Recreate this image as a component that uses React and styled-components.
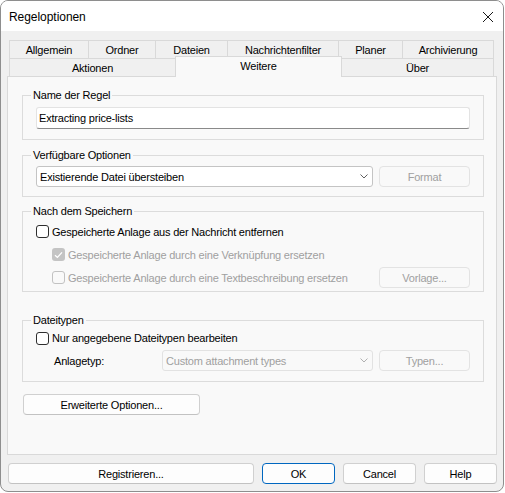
import React from "react";
import styled, { createGlobalStyle } from "styled-components";

const Global = createGlobalStyle`
  html, body { margin: 0; padding: 0; background: #ffffff; }
  * { box-sizing: border-box; }
  body { font-family: "Liberation Sans", Arial, sans-serif; font-size: 11px; color: #000; }
`;

const Window = styled.div`
  width: 504px;
  height: 492px;
  border: 1px solid #8e8e8e;
  border-radius: 8px;
  overflow: hidden;
  background: #f0f0f0;
  display: flex;
  flex-direction: column;
`;

const TitleBar = styled.div`
  height: 30px;
  flex: none;
  background: #ffffff;
  display: flex;
  align-items: center;
  justify-content: space-between;
  padding: 0 9px 0 8px;
`;

const Title = styled.span`
  font-size: 12px;
  letter-spacing: -0.05px;
  padding-top: 1px;
`;

const CloseBtn = styled.span`
  display: flex;
  width: 12px;
  height: 12px;
  margin-top: 1px;
`;

const Body = styled.div`
  flex: 1;
  display: flex;
  flex-direction: column;
  padding: 9px 6px 0 6px;
  min-height: 0;
`;

const TabStrip = styled.div`
  display: flex;
  flex-direction: column;
  margin: 0 3px 0 2px;
  position: relative;
  z-index: 2;
`;

const TabRow = styled.div`
  display: flex;
  height: 18px;
`;

const Tab = styled.div`
  flex: none;
  height: 18px;
  border-top: 1px solid #d9d9d9;
  border-left: 1px solid #d9d9d9;
  border-right: ${(p) => (p.$last ? "1px solid #d9d9d9" : "none")};
  background: #f0f0f0;
  display: flex;
  align-items: center;
  justify-content: center;
  letter-spacing: -0.2px;
  padding-top: 1px;
`;

const ActiveTab = styled.div`
  flex: none;
  height: 21px;
  margin-top: -2px;
  margin-right: -1px;
  position: relative;
  z-index: 3;
  border: 1px solid #d9d9d9;
  border-bottom: none;
  background: #f9f9f9;
  display: flex;
  justify-content: center;
  padding-top: 3px;
  letter-spacing: -0.2px;
`;

const Panel = styled.div`
  flex: 1;
  border: 1px solid #d9d9d9;
  background: #f9f9f9;
  padding: 12px 12px 0 14px;
  display: flex;
  flex-direction: column;
  position: relative;
  z-index: 1;
`;

const Group = styled.fieldset`
  margin: ${(p) => p.$mt || 0}px 0 0 0;
  border: 1px solid #dcdcdc;
  padding: ${(p) => p.$pt || 0}px 13px ${(p) => p.$pb || 0}px 13px;
  min-width: 0;
`;

const Legend = styled.legend`
  padding: 0 2px;
  margin-left: -5px;
  line-height: 13px;
  letter-spacing: -0.2px;
`;

const TextInput = styled.div`
  height: 22px;
  background: #ffffff;
  border: 1px solid #e3e3e3;
  border-bottom: 1px solid #8a8a8a;
  border-radius: 3px;
  display: flex;
  align-items: center;
  padding-left: 2px;
  letter-spacing: -0.2px;
`;

const Line = styled.div`
  display: flex;
  align-items: center;
  height: ${(p) => p.$h || 23}px;
  padding-left: ${(p) => p.$indent || 0}px;
`;

const Select = styled.div`
  width: ${(p) => p.$w}px;
  height: ${(p) => p.$h || 21}px;
  flex: none;
  margin-left: ${(p) => p.$ml || 0}px;
  background: ${(p) => (p.$disabled ? "#f9f9f9" : "#ffffff")};
  border: 1px solid ${(p) => (p.$disabled ? "#e2e2e2" : "#c4c4c4")};
  border-radius: 3px;
  display: flex;
  align-items: center;
  justify-content: space-between;
  padding: 0 4px 0 3px;
  color: ${(p) => (p.$disabled ? "#a0a0a0" : "#000")};
  letter-spacing: -0.2px;
`;

const Button = styled.div`
  flex: none;
  width: ${(p) => p.$w}px;
  height: ${(p) => p.$h || 21}px;
  margin-left: ${(p) => p.$ml || 0}px;
  background: ${(p) => (p.$disabled ? "#f9f9f9" : "#fdfdfd")};
  border: 1px solid ${(p) => (p.$primary ? "#0067c0" : p.$disabled ? "#e3e3e3" : "#d0d0d0")};
  border-bottom-color: ${(p) => (p.$primary ? "#0067c0" : p.$disabled ? "#e3e3e3" : "#c2c2c2")};
  border-radius: 4px;
  display: flex;
  align-items: center;
  justify-content: center;
  color: ${(p) => (p.$disabled ? "#a0a0a0" : "#000")};
  letter-spacing: -0.2px;
`;

const Box = styled.span`
  width: 13px;
  height: 13px;
  flex: none;
  border-radius: 3px;
  border: 1px solid ${(p) => (p.$checked ? "transparent" : p.$disabled ? "#c2c2c2" : "#2e2e2e")};
  background: ${(p) => (p.$checked ? "#c4c4c4" : p.$disabled ? "#f9f9f9" : "#ffffff")};
  display: flex;
  align-items: center;
  justify-content: center;
  margin-right: 3px;
`;

const Label = styled.span`
  color: ${(p) => (p.$disabled ? "#a0a0a0" : "#000")};
  letter-spacing: -0.2px;
`;

const FieldLabel = styled.span`
  width: ${(p) => p.$w}px;
  flex: none;
  letter-spacing: -0.2px;
`;

const Spacer = styled.div`
  flex: 1;
`;

const Footer = styled.div`
  display: flex;
  gap: 8px;
  padding: 8px 0 7px 1px;
  flex: none;
`;

const Check = ({ checked, disabled }) => (
  <Box $checked={checked} $disabled={disabled}>
    {checked && (
      <svg width="9" height="8" viewBox="0 0 9 8">
        <path d="M1 4.2 L3.4 6.4 L8 1.4" fill="none" stroke="#ffffff" strokeWidth="1.3" />
      </svg>
    )}
  </Box>
);

const Chevron = ({ color = "#606060" }) => (
  <svg width="8" height="5" viewBox="0 0 8 5">
    <path d="M0.5 0.5 L4 4 L7.5 0.5" fill="none" stroke={color} strokeWidth="1" />
  </svg>
);

const row1 = [
  ["Allgemein", 79],
  ["Ordner", 67],
  ["Dateien", 72],
  ["Nachrichtenfilter", 111],
  ["Planer", 64],
  ["Archivierung", 92],
];

export default function App() {
  return (
    <>
      <Global />
      <Window>
        <TitleBar>
          <Title>Regeloptionen</Title>
          <CloseBtn>
            <svg width="12" height="12" viewBox="0 0 12 12">
              <path d="M1 1 L11 11 M11 1 L1 11" stroke="#1a1a1a" strokeWidth="1" />
            </svg>
          </CloseBtn>
        </TitleBar>
        <Body>
          <TabStrip>
            <TabRow>
              {row1.map(([t, w], i) => (
                <Tab key={t} style={{ width: w }} $last={i === row1.length - 1}>
                  {t}
                </Tab>
              ))}
            </TabRow>
            <TabRow>
              <Tab style={{ width: 166 }}>Aktionen</Tab>
              <ActiveTab style={{ width: 167 }}>Weitere</ActiveTab>
              <Tab style={{ width: 153 }} $last>
                Über
              </Tab>
            </TabRow>
          </TabStrip>
          <Panel>
            <Group $pt={5} $pb={10}>
              <Legend>Name der Regel</Legend>
              <TextInput>Extracting price-lists</TextInput>
            </Group>
            <Group $mt={9} $pt={4} $pb={9}>
              <Legend>Verfügbare Optionen</Legend>
              <Line $h={21}>
                <Select $w={337}>
                  Existierende Datei übersteiben
                  <Chevron />
                </Select>
                <Button $w={91} $h={21} $ml={6} $disabled>
                  Format
                </Button>
              </Line>
            </Group>
            <Group $mt={8} $pt={2} $pb={2}>
              <Legend>Nach dem Speichern</Legend>
              <Line>
                <Check />
                <Label>Gespeicherte Anlage aus der Nachricht entfernen</Label>
              </Line>
              <Line $indent={16}>
                <Check checked disabled />
                <Label $disabled>Gespeicherte Anlage durch eine Verknüpfung ersetzen</Label>
              </Line>
              <Line $indent={16}>
                <Check disabled />
                <Label $disabled>Gespeicherte Anlage durch eine Textbeschreibung ersetzen</Label>
                <Spacer />
                <Button $w={91} $h={21} $disabled>
                  Vorlage...
                </Button>
              </Line>
            </Group>
            <Group $mt={22} $pt={0} $pb={9}>
              <Legend>Dateitypen</Legend>
              <Line $h={22}>
                <Check />
                <Label>Nur angegebene Dateitypen bearbeiten</Label>
              </Line>
              <Line $h={23} $indent={18}>
                <FieldLabel $w={108}>Anlagetyp:</FieldLabel>
                <Select $w={211} $disabled>
                  Custom attachment types
                  <Chevron color="#b0b0b0" />
                </Select>
                <Spacer />
                <Button $w={91} $h={21} $disabled>
                  Typen...
                </Button>
              </Line>
            </Group>
            <Line $h={21} style={{ marginTop: 12 }}>
              <Button $w={177} $ml={1}>
                Erweiterte Optionen...
              </Button>
            </Line>
          </Panel>
          <Footer>
            <Button $w={246}>Registrieren...</Button>
            <Button $w={73} $primary>
              OK
            </Button>
            <Button $w={73}>Cancel</Button>
            <Button $w={73}>Help</Button>
          </Footer>
        </Body>
      </Window>
    </>
  );
}
